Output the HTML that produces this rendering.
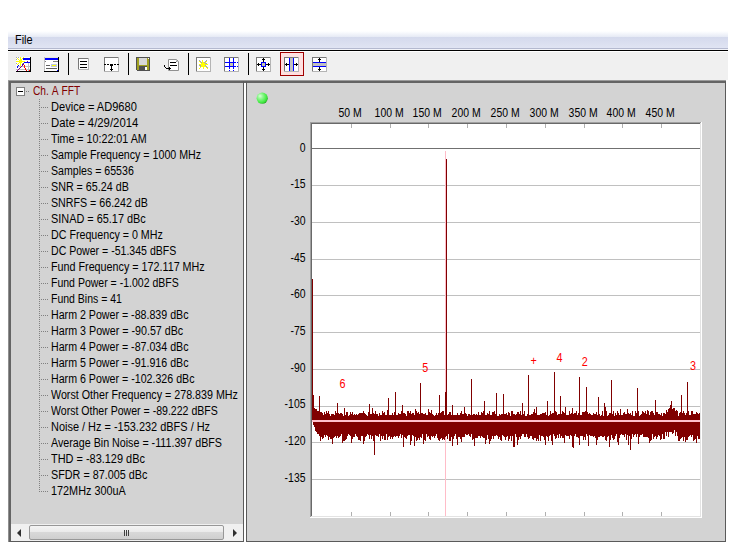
<!DOCTYPE html>
<html><head><meta charset="utf-8"><title>Ch. A FFT</title>
<style>
html,body{margin:0;padding:0;background:#fff;}
body{width:736px;height:552px;position:relative;overflow:hidden;font:12px 'Liberation Sans', sans-serif;color:#000;}
.menubar{position:absolute;left:8px;top:31px;width:720px;height:17px;background:linear-gradient(#ffffff 0%,#fbfcfe 6%,#e6eaf5 34%,#d4d9ec 35%,#e0e4f3 100%);border-bottom:1px solid #b4b9cf;}
.menubar span{position:absolute;left:7px;top:2px;font-size:12px;transform:scaleX(0.91);transform-origin:0 0;}
.mline{position:absolute;left:8px;top:49px;width:720px;height:1px;background:#f2f3f9;border-bottom:1px solid #000;}
.toolbar{position:absolute;left:8px;top:52px;width:720px;height:28px;background:#f0f0f0;}
.lpanel{position:absolute;left:8px;top:80px;width:236px;height:462px;background:#d3d3d3;box-sizing:border-box;border:1px solid #5a5a5a;border-top:3px solid #646464;border-left:3px solid #646464;}
.lpanel:before{content:'';position:absolute;left:-3px;top:-3px;width:1px;height:462px;background:#909090;}
.rpanel{position:absolute;left:246px;top:80px;width:480px;height:462px;background:#d3d3d3;box-sizing:border-box;border:1px solid #5a5a5a;border-top:3px solid #646464;}
.topline{position:absolute;left:8px;top:80px;width:718px;height:1px;background:#9c9c9c;}
.root,.row{position:absolute;height:16px;line-height:16px;white-space:pre;transform-origin:0 50%;}
.root{left:32.7px;color:#800000;transform:scaleX(0.85);word-spacing:0.8px;}
.row{left:50.7px;}
.hdot{position:absolute;left:39px;width:9px;height:1px;background:repeating-linear-gradient(90deg,#808080 0 1px,transparent 1px 2px);}
.vdot{position:absolute;left:39px;top:99px;width:1px;height:393px;background:repeating-linear-gradient(180deg,#808080 0 1px,transparent 1px 2px);}
.rdot{position:absolute;left:26px;top:91px;width:4px;height:1px;background:repeating-linear-gradient(90deg,#808080 0 1px,transparent 1px 2px);}
.pm{position:absolute;left:16px;top:87px;width:9px;height:9px;box-sizing:border-box;border:1px solid #808080;background:#fff;}
.pm i{position:absolute;left:1px;top:3px;width:5px;height:1px;background:#000;}
.hscroll{position:absolute;left:11px;top:524px;width:232px;height:17px;background:#f0f0f0;}
.thumb{position:absolute;left:18px;top:1px;width:195px;height:15px;box-sizing:border-box;border:1px solid #979797;border-radius:2px;background:linear-gradient(#f4f4f4 0%,#eaeaea 45%,#d8d8d8 50%,#cfcfcf 100%);}
.grip{position:absolute;left:94px;top:4px;width:5px;height:6px;background:repeating-linear-gradient(90deg,#404040 0 1px,transparent 1px 2px);}
.arr{position:absolute;top:5px;width:0;height:0;border-top:4px solid transparent;border-bottom:4px solid transparent;}
.arr.l{left:6px;border-right:4px solid #303030;}
.arr.r{left:222px;border-left:4px solid #303030;}
svg.plot,svg.icons{position:absolute;left:0;top:0;}
</style></head><body>
<div class="menubar"><span>File</span></div>
<div class="mline"></div>
<div class="toolbar"></div>
<div class="lpanel"></div>
<div class="rpanel"></div>
<div class="topline"></div><div style="position:absolute;left:244px;top:81px;width:2px;height:2px;background:#646464"></div>
<div class="pm"><i></i></div><div class="rdot"></div><div class="vdot"></div>
<div class="root" style="top:83px">Ch. A FFT</div>
<div class="row" style="top:99px;transform:scaleX(0.9220)">Device = AD9680</div>
<div class="hdot" style="top:107px"></div>
<div class="row" style="top:115px;transform:scaleX(0.9446)">Date = 4/29/2014</div>
<div class="hdot" style="top:123px"></div>
<div class="row" style="top:131px;transform:scaleX(0.8920)">Time = 10:22:01 AM</div>
<div class="hdot" style="top:139px"></div>
<div class="row" style="top:147px;transform:scaleX(0.8877)">Sample Frequency = 1000 MHz</div>
<div class="hdot" style="top:155px"></div>
<div class="row" style="top:163px;transform:scaleX(0.8833)">Samples = 65536</div>
<div class="hdot" style="top:171px"></div>
<div class="row" style="top:179px;transform:scaleX(0.8936)">SNR = 65.24 dB</div>
<div class="hdot" style="top:187px"></div>
<div class="row" style="top:195px;transform:scaleX(0.8885)">SNRFS = 66.242 dB</div>
<div class="hdot" style="top:203px"></div>
<div class="row" style="top:211px;transform:scaleX(0.9081)">SINAD = 65.17 dBc</div>
<div class="hdot" style="top:219px"></div>
<div class="row" style="top:227px;transform:scaleX(0.8893)">DC Frequency = 0 MHz</div>
<div class="hdot" style="top:235px"></div>
<div class="row" style="top:243px;transform:scaleX(0.8799)">DC Power = -51.345 dBFS</div>
<div class="hdot" style="top:251px"></div>
<div class="row" style="top:259px;transform:scaleX(0.8960)">Fund Frequency = 172.117 MHz</div>
<div class="hdot" style="top:267px"></div>
<div class="row" style="top:275px;transform:scaleX(0.8762)">Fund Power = -1.002 dBFS</div>
<div class="hdot" style="top:283px"></div>
<div class="row" style="top:291px;transform:scaleX(0.8746)">Fund Bins = 41</div>
<div class="hdot" style="top:299px"></div>
<div class="row" style="top:307px;transform:scaleX(0.8866)">Harm 2 Power = -88.839 dBc</div>
<div class="hdot" style="top:315px"></div>
<div class="row" style="top:323px;transform:scaleX(0.8908)">Harm 3 Power = -90.57 dBc</div>
<div class="hdot" style="top:331px"></div>
<div class="row" style="top:339px;transform:scaleX(0.8866)">Harm 4 Power = -87.034 dBc</div>
<div class="hdot" style="top:347px"></div>
<div class="row" style="top:355px;transform:scaleX(0.8866)">Harm 5 Power = -91.916 dBc</div>
<div class="hdot" style="top:363px"></div>
<div class="row" style="top:371px;transform:scaleX(0.8872)">Harm 6 Power = -102.326 dBc</div>
<div class="hdot" style="top:379px"></div>
<div class="row" style="top:387px;transform:scaleX(0.8919)">Worst Other Frequency = 278.839 MHz</div>
<div class="hdot" style="top:395px"></div>
<div class="row" style="top:403px;transform:scaleX(0.8801)">Worst Other Power = -89.222 dBFS</div>
<div class="hdot" style="top:411px"></div>
<div class="row" style="top:419px;transform:scaleX(0.9122)">Noise / Hz = -153.232 dBFS / Hz</div>
<div class="hdot" style="top:427px"></div>
<div class="row" style="top:435px;transform:scaleX(0.8916)">Average Bin Noise = -111.397 dBFS</div>
<div class="hdot" style="top:443px"></div>
<div class="row" style="top:451px;transform:scaleX(0.9111)">THD = -83.129 dBc</div>
<div class="hdot" style="top:459px"></div>
<div class="row" style="top:467px;transform:scaleX(0.8995)">SFDR = 87.005 dBc</div>
<div class="hdot" style="top:475px"></div>
<div class="row" style="top:483px;transform:scaleX(0.9043)">172MHz 300uA</div>
<div class="hdot" style="top:491px"></div>
<div class="hscroll"><div class="arr l"></div><div class="thumb"><div class="grip"></div></div><div class="arr r"></div></div>
<svg class="plot" width="736" height="552" viewBox="0 0 736 552" shape-rendering="crispEdges" font-family="'Liberation Sans', sans-serif" font-size="12">
<rect x="310" y="122" width="392" height="396" fill="#ffffff"/><rect x="310" y="122" width="391" height="395" fill="#a0a0a0"/><rect x="311" y="123" width="390" height="394" fill="#e3e3e3"/><rect x="311" y="123" width="389" height="393" fill="#696969"/>
<rect x="312" y="124" width="388" height="392" fill="#ffffff"/>
<rect x="312" y="148" width="388" height="1" fill="#707070"/><rect x="312" y="185" width="388" height="1" fill="#c0c0c0"/><rect x="312" y="222" width="388" height="1" fill="#c0c0c0"/><rect x="312" y="259" width="388" height="1" fill="#c0c0c0"/><rect x="312" y="295" width="388" height="1" fill="#c0c0c0"/><rect x="312" y="332" width="388" height="1" fill="#c0c0c0"/><rect x="312" y="369" width="388" height="1" fill="#c0c0c0"/><rect x="312" y="406" width="388" height="1" fill="#c0c0c0"/><rect x="312" y="442" width="388" height="1" fill="#c0c0c0"/><rect x="312" y="479" width="388" height="1" fill="#c0c0c0"/>
<rect x="351" y="124" width="1" height="4" fill="#b0b0b0"/><rect x="351" y="512" width="1" height="4" fill="#b0b0b0"/><rect x="390" y="124" width="1" height="4" fill="#b0b0b0"/><rect x="390" y="512" width="1" height="4" fill="#b0b0b0"/><rect x="428" y="124" width="1" height="4" fill="#b0b0b0"/><rect x="428" y="512" width="1" height="4" fill="#b0b0b0"/><rect x="467" y="124" width="1" height="4" fill="#b0b0b0"/><rect x="467" y="512" width="1" height="4" fill="#b0b0b0"/><rect x="506" y="124" width="1" height="4" fill="#b0b0b0"/><rect x="506" y="512" width="1" height="4" fill="#b0b0b0"/><rect x="545" y="124" width="1" height="4" fill="#b0b0b0"/><rect x="545" y="512" width="1" height="4" fill="#b0b0b0"/><rect x="584" y="124" width="1" height="4" fill="#b0b0b0"/><rect x="584" y="512" width="1" height="4" fill="#b0b0b0"/><rect x="622" y="124" width="1" height="4" fill="#b0b0b0"/><rect x="622" y="512" width="1" height="4" fill="#b0b0b0"/><rect x="661" y="124" width="1" height="4" fill="#b0b0b0"/><rect x="661" y="512" width="1" height="4" fill="#b0b0b0"/>
<rect x="445" y="151" width="1" height="365" fill="#ffbcc8"/>
<g fill="#800000"><path d="M312,395 L313,395 L313,395 L314,395 L314,408 L315,408 L315,409 L316,409 L316,409 L317,409 L317,411 L318,411 L318,411 L319,411 L319,411 L320,411 L320,412 L321,412 L321,412 L322,412 L322,413 L323,413 L323,415 L324,415 L324,412 L325,412 L325,414 L326,414 L326,411 L327,411 L327,413 L328,413 L328,411 L329,411 L329,414 L330,414 L330,416 L331,416 L331,414 L332,414 L332,414 L333,414 L333,414 L334,414 L334,415 L335,415 L335,411 L336,411 L336,413 L337,413 L337,412 L338,412 L338,413 L339,413 L339,414 L340,414 L340,413 L341,413 L341,413 L342,413 L342,414 L343,414 L343,416 L344,416 L344,415 L345,415 L345,415 L346,415 L346,412 L347,412 L347,412 L348,412 L348,416 L349,416 L349,415 L350,415 L350,412 L351,412 L351,414 L352,414 L352,412 L353,412 L353,415 L354,415 L354,414 L355,414 L355,415 L356,415 L356,414 L357,414 L357,415 L358,415 L358,414 L359,414 L359,413 L360,413 L360,413 L361,413 L361,413 L362,413 L362,413 L363,413 L363,411 L364,411 L364,413 L365,413 L365,414 L366,414 L366,415 L367,415 L367,416 L368,416 L368,412 L369,412 L369,413 L370,413 L370,414 L371,414 L371,414 L372,414 L372,408 L373,408 L373,413 L374,413 L374,414 L375,414 L375,411 L376,411 L376,414 L377,414 L377,414 L378,414 L378,416 L379,416 L379,413 L380,413 L380,415 L381,415 L381,415 L382,415 L382,411 L383,411 L383,413 L384,413 L384,412 L385,412 L385,415 L386,415 L386,415 L387,415 L387,410 L388,410 L388,415 L389,415 L389,415 L390,415 L390,415 L391,415 L391,415 L392,415 L392,413 L393,413 L393,415 L394,415 L394,412 L395,412 L395,413 L396,413 L396,415 L397,415 L397,415 L398,415 L398,413 L399,413 L399,414 L400,414 L400,414 L401,414 L401,411 L402,411 L402,415 L403,415 L403,413 L404,413 L404,413 L405,413 L405,414 L406,414 L406,416 L407,416 L407,411 L408,411 L408,411 L409,411 L409,413 L410,413 L410,411 L411,411 L411,414 L412,414 L412,413 L413,413 L413,413 L414,413 L414,415 L415,415 L415,409 L416,409 L416,411 L417,411 L417,413 L418,413 L418,412 L419,412 L419,414 L420,414 L420,413 L421,413 L421,413 L422,413 L422,413 L423,413 L423,414 L424,414 L424,414 L425,414 L425,413 L426,413 L426,415 L427,415 L427,415 L428,415 L428,409 L429,409 L429,412 L430,412 L430,413 L431,413 L431,410 L432,410 L432,414 L433,414 L433,415 L434,415 L434,416 L435,416 L435,415 L436,415 L436,413 L437,413 L437,415 L438,415 L438,413 L439,413 L439,411 L440,411 L440,413 L441,413 L441,412 L442,412 L442,411 L443,411 L443,411 L444,411 L444,415 L445,415 L445,415 L446,415 L446,413 L447,413 L447,415 L448,415 L448,414 L449,414 L449,412 L450,412 L450,412 L451,412 L451,415 L452,415 L452,413 L453,413 L453,415 L454,415 L454,415 L455,415 L455,415 L456,415 L456,415 L457,415 L457,413 L458,413 L458,415 L459,415 L459,415 L460,415 L460,413 L461,413 L461,411 L462,411 L462,414 L463,414 L463,414 L464,414 L464,414 L465,414 L465,413 L466,413 L466,414 L467,414 L467,416 L468,416 L468,414 L469,414 L469,414 L470,414 L470,415 L471,415 L471,414 L472,414 L472,415 L473,415 L473,414 L474,414 L474,414 L475,414 L475,415 L476,415 L476,414 L477,414 L477,415 L478,415 L478,412 L479,412 L479,415 L480,415 L480,415 L481,415 L481,412 L482,412 L482,413 L483,413 L483,411 L484,411 L484,413 L485,413 L485,415 L486,415 L486,415 L487,415 L487,413 L488,413 L488,414 L489,414 L489,411 L490,411 L490,415 L491,415 L491,415 L492,415 L492,412 L493,412 L493,412 L494,412 L494,411 L495,411 L495,414 L496,414 L496,414 L497,414 L497,416 L498,416 L498,416 L499,416 L499,414 L500,414 L500,415 L501,415 L501,414 L502,414 L502,414 L503,414 L503,414 L504,414 L504,414 L505,414 L505,414 L506,414 L506,413 L507,413 L507,415 L508,415 L508,412 L509,412 L509,413 L510,413 L510,416 L511,416 L511,411 L512,411 L512,411 L513,411 L513,414 L514,414 L514,414 L515,414 L515,415 L516,415 L516,414 L517,414 L517,412 L518,412 L518,412 L519,412 L519,414 L520,414 L520,411 L521,411 L521,415 L522,415 L522,415 L523,415 L523,414 L524,414 L524,411 L525,411 L525,416 L526,416 L526,416 L527,416 L527,414 L528,414 L528,416 L529,416 L529,415 L530,415 L530,415 L531,415 L531,414 L532,414 L532,414 L533,414 L533,412 L534,412 L534,409 L535,409 L535,413 L536,413 L536,414 L537,414 L537,415 L538,415 L538,415 L539,415 L539,415 L540,415 L540,414 L541,414 L541,414 L542,414 L542,413 L543,413 L543,413 L544,413 L544,413 L545,413 L545,412 L546,412 L546,415 L547,415 L547,411 L548,411 L548,416 L549,416 L549,415 L550,415 L550,411 L551,411 L551,414 L552,414 L552,413 L553,413 L553,413 L554,413 L554,414 L555,414 L555,411 L556,411 L556,412 L557,412 L557,415 L558,415 L558,414 L559,414 L559,414 L560,414 L560,414 L561,414 L561,414 L562,414 L562,411 L563,411 L563,412 L564,412 L564,413 L565,413 L565,414 L566,414 L566,415 L567,415 L567,415 L568,415 L568,415 L569,415 L569,411 L570,411 L570,414 L571,414 L571,413 L572,413 L572,413 L573,413 L573,414 L574,414 L574,413 L575,413 L575,413 L576,413 L576,411 L577,411 L577,415 L578,415 L578,413 L579,413 L579,410 L580,410 L580,415 L581,415 L581,415 L582,415 L582,412 L583,412 L583,412 L584,412 L584,412 L585,412 L585,411 L586,411 L586,413 L587,413 L587,412 L588,412 L588,414 L589,414 L589,413 L590,413 L590,414 L591,414 L591,415 L592,415 L592,415 L593,415 L593,413 L594,413 L594,414 L595,414 L595,414 L596,414 L596,412 L597,412 L597,415 L598,415 L598,412 L599,412 L599,414 L600,414 L600,416 L601,416 L601,415 L602,415 L602,411 L603,411 L603,416 L604,416 L604,413 L605,413 L605,409 L606,409 L606,411 L607,411 L607,416 L608,416 L608,415 L609,415 L609,413 L610,413 L610,413 L611,413 L611,415 L612,415 L612,414 L613,414 L613,411 L614,411 L614,416 L615,416 L615,413 L616,413 L616,415 L617,415 L617,411 L618,411 L618,413 L619,413 L619,415 L620,415 L620,409 L621,409 L621,415 L622,415 L622,415 L623,415 L623,413 L624,413 L624,412 L625,412 L625,414 L626,414 L626,414 L627,414 L627,409 L628,409 L628,413 L629,413 L629,414 L630,414 L630,413 L631,413 L631,415 L632,415 L632,411 L633,411 L633,416 L634,416 L634,416 L635,416 L635,411 L636,411 L636,413 L637,413 L637,411 L638,411 L638,411 L639,411 L639,416 L640,416 L640,415 L641,415 L641,414 L642,414 L642,411 L643,411 L643,412 L644,412 L644,413 L645,413 L645,411 L646,411 L646,414 L647,414 L647,410 L648,410 L648,411 L649,411 L649,415 L650,415 L650,412 L651,412 L651,411 L652,411 L652,411 L653,411 L653,413 L654,413 L654,415 L655,415 L655,413 L656,413 L656,412 L657,412 L657,412 L658,412 L658,414 L659,414 L659,414 L660,414 L660,415 L661,415 L661,413 L662,413 L662,416 L663,416 L663,413 L664,413 L664,413 L665,413 L665,414 L666,414 L666,410 L667,410 L667,412 L668,412 L668,409 L669,409 L669,408 L670,408 L670,405 L671,405 L671,408 L672,408 L672,409 L673,409 L673,408 L674,408 L674,408 L675,408 L675,411 L676,411 L676,410 L677,410 L677,411 L678,411 L678,416 L679,416 L679,413 L680,413 L680,412 L681,412 L681,412 L682,412 L682,413 L683,413 L683,411 L684,411 L684,413 L685,413 L685,415 L686,415 L686,413 L687,413 L687,415 L688,415 L688,411 L689,411 L689,415 L690,415 L690,415 L691,415 L691,411 L692,411 L692,411 L693,411 L693,414 L694,414 L694,414 L695,414 L695,414 L696,414 L696,412 L697,412 L697,413 L698,413 L698,414 L699,414 L699,413 L700,413 L700,439 L699,439 L699,439 L698,439 L698,436 L697,436 L697,436 L696,436 L696,439 L695,439 L695,440 L694,440 L694,441 L693,441 L693,435 L692,435 L692,437 L691,437 L691,435 L690,435 L690,436 L689,436 L689,437 L688,437 L688,440 L687,440 L687,440 L686,440 L686,442 L685,442 L685,437 L684,437 L684,441 L683,441 L683,437 L682,437 L682,438 L681,438 L681,439 L680,439 L680,441 L679,441 L679,441 L678,441 L678,436 L677,436 L677,432 L676,432 L676,436 L675,436 L675,430 L674,430 L674,433 L673,433 L673,434 L672,434 L672,432 L671,432 L671,432 L670,432 L670,432 L669,432 L669,437 L668,437 L668,432 L667,432 L667,436 L666,436 L666,432 L665,432 L665,439 L664,439 L664,439 L663,439 L663,434 L662,434 L662,439 L661,439 L661,440 L660,440 L660,436 L659,436 L659,435 L658,435 L658,437 L657,437 L657,439 L656,439 L656,436 L655,436 L655,437 L654,437 L654,439 L653,439 L653,434 L652,434 L652,440 L651,440 L651,441 L650,441 L650,434 L649,434 L649,438 L648,438 L648,437 L647,437 L647,437 L646,437 L646,437 L645,437 L645,437 L644,437 L644,437 L643,437 L643,434 L642,434 L642,435 L641,435 L641,435 L640,435 L640,437 L639,437 L639,435 L638,435 L638,434 L637,434 L637,437 L636,437 L636,434 L635,434 L635,435 L634,435 L634,437 L633,437 L633,434 L632,434 L632,439 L631,439 L631,438 L630,438 L630,436 L629,436 L629,436 L628,436 L628,435 L627,435 L627,440 L626,440 L626,434 L625,434 L625,437 L624,437 L624,435 L623,435 L623,435 L622,435 L622,434 L621,434 L621,435 L620,435 L620,438 L619,438 L619,436 L618,436 L618,442 L617,442 L617,434 L616,434 L616,436 L615,436 L615,439 L614,439 L614,440 L613,440 L613,438 L612,438 L612,435 L611,435 L611,440 L610,440 L610,436 L609,436 L609,436 L608,436 L608,437 L607,437 L607,441 L606,441 L606,440 L605,440 L605,436 L604,436 L604,437 L603,437 L603,437 L602,437 L602,436 L601,436 L601,436 L600,436 L600,437 L599,437 L599,437 L598,437 L598,440 L597,440 L597,445 L596,445 L596,438 L595,438 L595,436 L594,436 L594,437 L593,437 L593,436 L592,436 L592,436 L591,436 L591,436 L590,436 L590,435 L589,435 L589,436 L588,436 L588,436 L587,436 L587,434 L586,434 L586,440 L585,440 L585,437 L584,437 L584,440 L583,440 L583,436 L582,436 L582,436 L581,436 L581,436 L580,436 L580,439 L579,439 L579,438 L578,438 L578,437 L577,437 L577,437 L576,437 L576,434 L575,434 L575,436 L574,436 L574,440 L573,440 L573,439 L572,439 L572,436 L571,436 L571,435 L570,435 L570,439 L569,439 L569,436 L568,436 L568,436 L567,436 L567,436 L566,436 L566,435 L565,435 L565,443 L564,443 L564,438 L563,438 L563,438 L562,438 L562,436 L561,436 L561,438 L560,438 L560,434 L559,434 L559,438 L558,438 L558,435 L557,435 L557,438 L556,438 L556,439 L555,439 L555,436 L554,436 L554,434 L553,434 L553,445 L552,445 L552,441 L551,441 L551,435 L550,435 L550,436 L549,436 L549,441 L548,441 L548,437 L547,437 L547,436 L546,436 L546,439 L545,439 L545,440 L544,440 L544,437 L543,437 L543,436 L542,436 L542,436 L541,436 L541,441 L540,441 L540,435 L539,435 L539,441 L538,441 L538,439 L537,439 L537,441 L536,441 L536,438 L535,438 L535,438 L534,438 L534,440 L533,440 L533,439 L532,439 L532,436 L531,436 L531,436 L530,436 L530,438 L529,438 L529,439 L528,439 L528,437 L527,437 L527,434 L526,434 L526,437 L525,437 L525,437 L524,437 L524,434 L523,434 L523,434 L522,434 L522,436 L521,436 L521,439 L520,439 L520,437 L519,437 L519,440 L518,440 L518,437 L517,437 L517,437 L516,437 L516,434 L515,434 L515,436 L514,436 L514,435 L513,435 L513,436 L512,436 L512,441 L511,441 L511,436 L510,436 L510,439 L509,439 L509,441 L508,441 L508,436 L507,436 L507,437 L506,437 L506,440 L505,440 L505,437 L504,437 L504,436 L503,436 L503,435 L502,435 L502,441 L501,441 L501,440 L500,440 L500,437 L499,437 L499,439 L498,439 L498,436 L497,436 L497,435 L496,435 L496,436 L495,436 L495,436 L494,436 L494,439 L493,439 L493,436 L492,436 L492,439 L491,439 L491,441 L490,441 L490,444 L489,444 L489,439 L488,439 L488,435 L487,435 L487,440 L486,440 L486,437 L485,437 L485,438 L484,438 L484,438 L483,438 L483,437 L482,437 L482,436 L481,436 L481,438 L480,438 L480,436 L479,436 L479,436 L478,436 L478,438 L477,438 L477,438 L476,438 L476,438 L475,438 L475,446 L474,446 L474,439 L473,439 L473,440 L472,440 L472,434 L471,434 L471,437 L470,437 L470,436 L469,436 L469,434 L468,434 L468,435 L467,435 L467,435 L466,435 L466,434 L465,434 L465,437 L464,437 L464,437 L463,437 L463,437 L462,437 L462,442 L461,442 L461,439 L460,439 L460,437 L459,437 L459,437 L458,437 L458,435 L457,435 L457,439 L456,439 L456,434 L455,434 L455,436 L454,436 L454,439 L453,439 L453,439 L452,439 L452,437 L451,437 L451,441 L450,441 L450,441 L449,441 L449,434 L448,434 L448,439 L447,439 L447,436 L446,436 L446,437 L445,437 L445,440 L444,440 L444,439 L443,439 L443,440 L442,440 L442,438 L441,438 L441,439 L440,439 L440,441 L439,441 L439,440 L438,440 L438,438 L437,438 L437,434 L436,434 L436,436 L435,436 L435,438 L434,438 L434,436 L433,436 L433,437 L432,437 L432,436 L431,436 L431,440 L430,440 L430,439 L429,439 L429,436 L428,436 L428,437 L427,437 L427,434 L426,434 L426,441 L425,441 L425,440 L424,440 L424,438 L423,438 L423,434 L422,434 L422,438 L421,438 L421,437 L420,437 L420,440 L419,440 L419,438 L418,438 L418,440 L417,440 L417,441 L416,441 L416,437 L415,437 L415,436 L414,436 L414,436 L413,436 L413,435 L412,435 L412,441 L411,441 L411,437 L410,437 L410,435 L409,435 L409,435 L408,435 L408,436 L407,436 L407,439 L406,439 L406,438 L405,438 L405,437 L404,437 L404,435 L403,435 L403,435 L402,435 L402,438 L401,438 L401,434 L400,434 L400,436 L399,436 L399,438 L398,438 L398,436 L397,436 L397,436 L396,436 L396,437 L395,437 L395,436 L394,436 L394,437 L393,437 L393,439 L392,439 L392,437 L391,437 L391,439 L390,439 L390,436 L389,436 L389,437 L388,437 L388,440 L387,440 L387,434 L386,434 L386,440 L385,440 L385,440 L384,440 L384,436 L383,436 L383,439 L382,439 L382,436 L381,436 L381,441 L380,441 L380,434 L379,434 L379,437 L378,437 L378,436 L377,436 L377,436 L376,436 L376,435 L375,435 L375,436 L374,436 L374,441 L373,441 L373,436 L372,436 L372,439 L371,439 L371,435 L370,435 L370,439 L369,439 L369,435 L368,435 L368,434 L367,434 L367,436 L366,436 L366,437 L365,437 L365,441 L364,441 L364,434 L363,434 L363,436 L362,436 L362,436 L361,436 L361,441 L360,441 L360,440 L359,440 L359,440 L358,440 L358,437 L357,437 L357,436 L356,436 L356,434 L355,434 L355,437 L354,437 L354,437 L353,437 L353,439 L352,439 L352,437 L351,437 L351,436 L350,436 L350,435 L349,435 L349,434 L348,434 L348,436 L347,436 L347,439 L346,439 L346,440 L345,440 L345,441 L344,441 L344,441 L343,441 L343,443 L342,443 L342,434 L341,434 L341,436 L340,436 L340,437 L339,437 L339,438 L338,438 L338,436 L337,436 L337,438 L336,438 L336,436 L335,436 L335,437 L334,437 L334,438 L333,438 L333,441 L332,441 L332,439 L331,439 L331,439 L330,439 L330,437 L329,437 L329,440 L328,440 L328,436 L327,436 L327,435 L326,435 L326,437 L325,437 L325,435 L324,435 L324,438 L323,438 L323,439 L322,439 L322,437 L321,437 L321,435 L320,435 L320,436 L319,436 L319,434 L318,434 L318,434 L317,434 L317,432 L316,432 L316,431 L315,431 L315,427 L314,427 L314,425 L313,425 L313,420 L312,420Z"/><rect x="312" y="279" width="1" height="141"/><rect x="319" y="396" width="1" height="24"/><rect x="337" y="403" width="1" height="17"/><rect x="344" y="408" width="1" height="12"/><rect x="369" y="404" width="1" height="16"/><rect x="388" y="398" width="1" height="22"/><rect x="395" y="392" width="1" height="28"/><rect x="402" y="405" width="1" height="15"/><rect x="420" y="383" width="1" height="37"/><rect x="439" y="395" width="1" height="25"/><rect x="445" y="392" width="1" height="28"/><rect x="446" y="159" width="1" height="261"/><rect x="452" y="405" width="1" height="15"/><rect x="464" y="407" width="1" height="13"/><rect x="471" y="379" width="1" height="41"/><rect x="484" y="401" width="1" height="19"/><rect x="496" y="393" width="1" height="27"/><rect x="503" y="394" width="1" height="26"/><rect x="522" y="403" width="1" height="17"/><rect x="528" y="375" width="1" height="45"/><rect x="536" y="407" width="1" height="13"/><rect x="547" y="401" width="1" height="19"/><rect x="554" y="372" width="1" height="48"/><rect x="560" y="396" width="1" height="24"/><rect x="565" y="407" width="1" height="13"/><rect x="572" y="408" width="1" height="12"/><rect x="579" y="377" width="1" height="43"/><rect x="586" y="387" width="1" height="33"/><rect x="598" y="397" width="1" height="23"/><rect x="604" y="403" width="1" height="17"/><rect x="605" y="407" width="1" height="13"/><rect x="611" y="380" width="1" height="40"/><rect x="637" y="388" width="1" height="32"/><rect x="655" y="400" width="1" height="20"/><rect x="671" y="401" width="1" height="19"/><rect x="681" y="395" width="1" height="25"/><rect x="687" y="382" width="1" height="38"/><rect x="332" y="420" width="1" height="24"/><rect x="320" y="420" width="1" height="21"/><rect x="374" y="420" width="1" height="35"/><rect x="403" y="420" width="1" height="27"/><rect x="414" y="420" width="1" height="26"/><rect x="452" y="420" width="1" height="26"/><rect x="457" y="420" width="1" height="25"/><rect x="513" y="420" width="1" height="27"/><rect x="514" y="420" width="1" height="27"/><rect x="517" y="420" width="1" height="25"/><rect x="572" y="420" width="1" height="27"/><rect x="573" y="420" width="1" height="28"/><rect x="579" y="420" width="1" height="25"/><rect x="588" y="420" width="1" height="26"/><rect x="609" y="420" width="1" height="27"/><rect x="618" y="420" width="1" height="25"/><rect x="628" y="420" width="1" height="25"/><rect x="630" y="420" width="1" height="30"/><rect x="638" y="420" width="1" height="24"/><rect x="649" y="420" width="1" height="23"/><rect x="696" y="420" width="1" height="23"/><rect x="410" y="420" width="1" height="25"/><rect x="423" y="420" width="1" height="24"/><rect x="351" y="420" width="1" height="23"/><rect x="363" y="420" width="1" height="24"/><rect x="545" y="420" width="1" height="25"/><rect x="485" y="420" width="1" height="24"/></g>
<rect x="312" y="420" width="388" height="2" fill="#ffc0cb"/>
<g fill="#000" textLength="0"><text transform="translate(305.5,151.8) scale(0.87,1)" text-anchor="end">0</text><text transform="translate(305.5,188.4) scale(0.87,1)" text-anchor="end">-15</text><text transform="translate(305.5,225.1) scale(0.87,1)" text-anchor="end">-30</text><text transform="translate(305.5,261.7) scale(0.87,1)" text-anchor="end">-45</text><text transform="translate(305.5,298.4) scale(0.87,1)" text-anchor="end">-60</text><text transform="translate(305.5,335.0) scale(0.87,1)" text-anchor="end">-75</text><text transform="translate(305.5,371.6) scale(0.87,1)" text-anchor="end">-90</text><text transform="translate(305.5,408.3) scale(0.87,1)" text-anchor="end">-105</text><text transform="translate(305.5,444.9) scale(0.87,1)" text-anchor="end">-120</text><text transform="translate(305.5,481.6) scale(0.87,1)" text-anchor="end">-135</text><text transform="translate(350.1,117) scale(0.87,1)" text-anchor="middle">50 M</text><text transform="translate(389.1,117) scale(0.87,1)" text-anchor="middle">100 M</text><text transform="translate(427.1,117) scale(0.87,1)" text-anchor="middle">150 M</text><text transform="translate(466.1,117) scale(0.87,1)" text-anchor="middle">200 M</text><text transform="translate(505.1,117) scale(0.87,1)" text-anchor="middle">250 M</text><text transform="translate(544.1,117) scale(0.87,1)" text-anchor="middle">300 M</text><text transform="translate(583.1,117) scale(0.87,1)" text-anchor="middle">350 M</text><text transform="translate(621.1,117) scale(0.87,1)" text-anchor="middle">400 M</text><text transform="translate(660.1,117) scale(0.87,1)" text-anchor="middle">450 M</text></g>
<text transform="translate(342.5,388) scale(0.9,1)" text-anchor="middle" fill="#ff0000">6</text><text transform="translate(425.3,372) scale(0.9,1)" text-anchor="middle" fill="#ff0000">5</text><text transform="translate(533.6,365) scale(0.9,1)" text-anchor="middle" fill="#ff0000">+</text><text transform="translate(559.4,362) scale(0.9,1)" text-anchor="middle" fill="#ff0000">4</text><text transform="translate(584.8,366) scale(0.9,1)" text-anchor="middle" fill="#ff0000">2</text><text transform="translate(693,370) scale(0.9,1)" text-anchor="middle" fill="#ff0000">3</text>
<circle cx="262.2" cy="98.2" r="5.6" fill="url(#led)" shape-rendering="auto"/>
<defs><radialGradient id="led" cx="0.38" cy="0.38" r="0.68" fx="0.3" fy="0.3"><stop offset="0" stop-color="#d8ffd8"/><stop offset="0.3" stop-color="#98f898"/><stop offset="0.65" stop-color="#58f058"/><stop offset="0.85" stop-color="#38e038"/><stop offset="1" stop-color="#1c9c1c"/></radialGradient></defs>
</svg>
<svg class="icons" width="736" height="552" viewBox="0 0 736 552" shape-rendering="crispEdges"><rect x="68" y="53" width="1" height="22" fill="#000"/><rect x="128" y="53" width="1" height="22" fill="#000"/><rect x="188" y="53" width="1" height="22" fill="#000"/><rect x="248" y="53" width="1" height="22" fill="#000"/><rect x="16" y="57" width="15" height="15" fill="#fff"/><rect x="16" y="57" width="1" height="1" fill="#a0a0b8"/><rect x="18" y="57" width="1" height="1" fill="#a0a0b8"/><rect x="20" y="57" width="1" height="1" fill="#ffff00"/><rect x="23" y="57" width="1" height="1" fill="#ffff00"/><rect x="30" y="57" width="1" height="1" fill="#000000"/><rect x="17" y="58" width="1" height="1" fill="#ffff00"/><rect x="20" y="58" width="1" height="1" fill="#ffff00"/><rect x="22" y="58" width="1" height="1" fill="#ffff00"/><rect x="23" y="58" width="7" height="1" fill="#0000ff"/><rect x="30" y="58" width="1" height="1" fill="#000000"/><rect x="16" y="59" width="1" height="1" fill="#a0a0b8"/><rect x="18" y="59" width="1" height="1" fill="#ffff00"/><rect x="20" y="59" width="2" height="1" fill="#ffff00"/><rect x="23" y="59" width="7" height="1" fill="#0000ff"/><rect x="30" y="59" width="1" height="1" fill="#000000"/><rect x="19" y="60" width="3" height="1" fill="#ffff00"/><rect x="30" y="60" width="1" height="1" fill="#000000"/><rect x="16" y="61" width="9" height="1" fill="#ffff00"/><rect x="27" y="61" width="1" height="1" fill="#800080"/><rect x="30" y="61" width="1" height="1" fill="#000000"/><rect x="19" y="62" width="3" height="1" fill="#ffff00"/><rect x="24" y="62" width="6" height="1" fill="#0000ff"/><rect x="30" y="62" width="1" height="1" fill="#000000"/><rect x="16" y="63" width="1" height="1" fill="#a0a0b8"/><rect x="18" y="63" width="1" height="1" fill="#ffff00"/><rect x="20" y="63" width="1" height="1" fill="#ffff00"/><rect x="22" y="63" width="1" height="1" fill="#ffff00"/><rect x="23" y="63" width="1" height="1" fill="#0000ff"/><rect x="28" y="63" width="1" height="1" fill="#c0c0c0"/><rect x="30" y="63" width="1" height="1" fill="#000000"/><rect x="17" y="64" width="1" height="1" fill="#ffff00"/><rect x="20" y="64" width="1" height="1" fill="#ffff00"/><rect x="22" y="64" width="1" height="1" fill="#0000ff"/><rect x="23" y="64" width="1" height="1" fill="#ff0000"/><rect x="28" y="64" width="1" height="1" fill="#c0c0c0"/><rect x="30" y="64" width="1" height="1" fill="#000000"/><rect x="18" y="65" width="1" height="1" fill="#0000ff"/><rect x="20" y="65" width="1" height="1" fill="#ffff00"/><rect x="22" y="65" width="1" height="1" fill="#800080"/><rect x="24" y="65" width="1" height="1" fill="#ff0000"/><rect x="28" y="65" width="1" height="1" fill="#c0c0c0"/><rect x="30" y="65" width="1" height="1" fill="#000000"/><rect x="17" y="66" width="1" height="1" fill="#0000ff"/><rect x="18" y="66" width="3" height="1" fill="#c0c0c0"/><rect x="21" y="66" width="1" height="1" fill="#800080"/><rect x="22" y="66" width="2" height="1" fill="#c0c0c0"/><rect x="24" y="66" width="1" height="1" fill="#ff0000"/><rect x="25" y="66" width="5" height="1" fill="#c0c0c0"/><rect x="30" y="66" width="1" height="1" fill="#000000"/><rect x="17" y="67" width="1" height="1" fill="#0000ff"/><rect x="20" y="67" width="1" height="1" fill="#800080"/><rect x="24" y="67" width="1" height="1" fill="#ff0000"/><rect x="28" y="67" width="1" height="1" fill="#c0c0c0"/><rect x="30" y="67" width="1" height="1" fill="#000000"/><rect x="19" y="68" width="1" height="1" fill="#800080"/><rect x="25" y="68" width="1" height="1" fill="#ff0000"/><rect x="28" y="68" width="1" height="1" fill="#c0c0c0"/><rect x="30" y="68" width="1" height="1" fill="#000000"/><rect x="16" y="69" width="2" height="1" fill="#c0c0c0"/><rect x="18" y="69" width="1" height="1" fill="#800080"/><rect x="19" y="69" width="6" height="1" fill="#c0c0c0"/><rect x="25" y="69" width="1" height="1" fill="#ff0000"/><rect x="26" y="69" width="4" height="1" fill="#c0c0c0"/><rect x="30" y="69" width="1" height="1" fill="#000000"/><rect x="17" y="70" width="1" height="1" fill="#800080"/><rect x="26" y="70" width="1" height="1" fill="#ff0000"/><rect x="28" y="70" width="1" height="1" fill="#c0c0c0"/><rect x="29" y="70" width="1" height="1" fill="#ff0000"/><rect x="30" y="70" width="1" height="1" fill="#000000"/><rect x="16" y="71" width="15" height="1" fill="#000000"/><rect x="44" y="57" width="15" height="15" fill="#fff"/><rect x="44" y="57" width="1" height="1" fill="#c0c0c0"/><rect x="45" y="57" width="13" height="1" fill="#e8e8d8"/><rect x="58" y="57" width="1" height="1" fill="#000000"/><rect x="44" y="58" width="1" height="1" fill="#c0c0c0"/><rect x="45" y="58" width="13" height="1" fill="#0000ff"/><rect x="58" y="58" width="1" height="1" fill="#000000"/><rect x="44" y="59" width="1" height="1" fill="#c0c0c0"/><rect x="45" y="59" width="13" height="1" fill="#0000ff"/><rect x="58" y="59" width="1" height="1" fill="#000000"/><rect x="44" y="60" width="1" height="1" fill="#c0c0c0"/><rect x="58" y="60" width="1" height="1" fill="#000000"/><rect x="44" y="61" width="1" height="1" fill="#c0c0c0"/><rect x="45" y="61" width="1" height="1" fill="#808080"/><rect x="53" y="61" width="5" height="1" fill="#808080"/><rect x="58" y="61" width="1" height="1" fill="#000000"/><rect x="44" y="62" width="1" height="1" fill="#c0c0c0"/><rect x="58" y="62" width="1" height="1" fill="#000000"/><rect x="44" y="63" width="1" height="1" fill="#c0c0c0"/><rect x="58" y="63" width="1" height="1" fill="#000000"/><rect x="44" y="64" width="1" height="1" fill="#c0c0c0"/><rect x="51" y="64" width="6" height="1" fill="#c0c8e0"/><rect x="58" y="64" width="1" height="1" fill="#000000"/><rect x="44" y="65" width="1" height="1" fill="#c0c0c0"/><rect x="46" y="65" width="4" height="1" fill="#606060"/><rect x="51" y="65" width="1" height="1" fill="#c0c8e0"/><rect x="52" y="65" width="4" height="1" fill="#ffff00"/><rect x="56" y="65" width="1" height="1" fill="#c0c8e0"/><rect x="58" y="65" width="1" height="1" fill="#000000"/><rect x="44" y="66" width="1" height="1" fill="#c0c0c0"/><rect x="51" y="66" width="6" height="1" fill="#c0c8e0"/><rect x="58" y="66" width="1" height="1" fill="#000000"/><rect x="44" y="67" width="1" height="1" fill="#c0c0c0"/><rect x="58" y="67" width="1" height="1" fill="#000000"/><rect x="44" y="68" width="1" height="1" fill="#c0c0c0"/><rect x="46" y="68" width="11" height="1" fill="#606060"/><rect x="58" y="68" width="1" height="1" fill="#000000"/><rect x="44" y="69" width="1" height="1" fill="#c0c0c0"/><rect x="58" y="69" width="1" height="1" fill="#000000"/><rect x="44" y="70" width="1" height="1" fill="#c0c0c0"/><rect x="57" y="70" width="1" height="1" fill="#0000ff"/><rect x="58" y="70" width="1" height="1" fill="#000000"/><rect x="44" y="71" width="15" height="1" fill="#000000"/><rect x="78" y="58" width="11" height="12" fill="#b4b4b4"/><rect x="78" y="58" width="10" height="11" fill="#787878"/><rect x="79" y="59" width="9" height="10" fill="#ffffff"/><rect x="80" y="61" width="7" height="1" fill="#000"/><rect x="80" y="64" width="7" height="1" fill="#000"/><rect x="80" y="67" width="7" height="1" fill="#000"/><rect x="104" y="57" width="15" height="15" fill="#b4b4b4"/><rect x="104" y="57" width="14" height="14" fill="#787878"/><rect x="105" y="58" width="13" height="13" fill="#ffffff"/><rect x="104" y="64" width="2" height="1" fill="#000000"/><rect x="107" y="64" width="2" height="1" fill="#000000"/><rect x="110" y="64" width="3" height="1" fill="#000000"/><rect x="114" y="64" width="2" height="1" fill="#000000"/><rect x="117" y="64" width="2" height="1" fill="#000000"/><rect x="110" y="65" width="3" height="1" fill="#000000"/><rect x="111" y="66" width="1" height="1" fill="#000000"/><rect x="111" y="67" width="1" height="1" fill="#000000"/><rect x="111" y="68" width="1" height="1" fill="#000000"/><rect x="110" y="69" width="3" height="1" fill="#000000"/><rect x="111" y="70" width="1" height="1" fill="#000000"/><rect x="136" y="57" width="14" height="1" fill="#505050"/><rect x="136" y="58" width="1" height="1" fill="#505050"/><rect x="137" y="58" width="2" height="1" fill="#a0a020"/><rect x="139" y="58" width="8" height="1" fill="#d8d8d8"/><rect x="147" y="58" width="1" height="1" fill="#a0a020"/><rect x="148" y="58" width="1" height="1" fill="#ffffff"/><rect x="149" y="58" width="1" height="1" fill="#505050"/><rect x="136" y="59" width="1" height="1" fill="#505050"/><rect x="137" y="59" width="2" height="1" fill="#a0a020"/><rect x="139" y="59" width="8" height="1" fill="#d8d8d8"/><rect x="147" y="59" width="2" height="1" fill="#a0a020"/><rect x="149" y="59" width="1" height="1" fill="#505050"/><rect x="136" y="60" width="1" height="1" fill="#505050"/><rect x="137" y="60" width="2" height="1" fill="#a0a020"/><rect x="139" y="60" width="8" height="1" fill="#d8d8d8"/><rect x="147" y="60" width="2" height="1" fill="#a0a020"/><rect x="149" y="60" width="1" height="1" fill="#505050"/><rect x="136" y="61" width="1" height="1" fill="#505050"/><rect x="137" y="61" width="2" height="1" fill="#a0a020"/><rect x="139" y="61" width="8" height="1" fill="#d8d8d8"/><rect x="147" y="61" width="2" height="1" fill="#a0a020"/><rect x="149" y="61" width="1" height="1" fill="#505050"/><rect x="136" y="62" width="1" height="1" fill="#505050"/><rect x="137" y="62" width="2" height="1" fill="#a0a020"/><rect x="139" y="62" width="8" height="1" fill="#d8d8d8"/><rect x="147" y="62" width="2" height="1" fill="#a0a020"/><rect x="149" y="62" width="1" height="1" fill="#505050"/><rect x="136" y="63" width="1" height="1" fill="#505050"/><rect x="137" y="63" width="2" height="1" fill="#a0a020"/><rect x="139" y="63" width="8" height="1" fill="#d8d8d8"/><rect x="147" y="63" width="2" height="1" fill="#a0a020"/><rect x="149" y="63" width="1" height="1" fill="#505050"/><rect x="136" y="64" width="1" height="1" fill="#505050"/><rect x="137" y="64" width="2" height="1" fill="#a0a020"/><rect x="139" y="64" width="8" height="1" fill="#d8d8d8"/><rect x="147" y="64" width="2" height="1" fill="#a0a020"/><rect x="149" y="64" width="1" height="1" fill="#505050"/><rect x="136" y="65" width="1" height="1" fill="#505050"/><rect x="137" y="65" width="12" height="1" fill="#a0a020"/><rect x="149" y="65" width="1" height="1" fill="#505050"/><rect x="136" y="66" width="1" height="1" fill="#505050"/><rect x="137" y="66" width="2" height="1" fill="#a0a020"/><rect x="139" y="66" width="8" height="1" fill="#505050"/><rect x="147" y="66" width="2" height="1" fill="#a0a020"/><rect x="149" y="66" width="1" height="1" fill="#505050"/><rect x="136" y="67" width="1" height="1" fill="#505050"/><rect x="137" y="67" width="2" height="1" fill="#a0a020"/><rect x="139" y="67" width="6" height="1" fill="#505050"/><rect x="145" y="67" width="2" height="1" fill="#ffffff"/><rect x="147" y="67" width="2" height="1" fill="#a0a020"/><rect x="149" y="67" width="1" height="1" fill="#505050"/><rect x="136" y="68" width="1" height="1" fill="#505050"/><rect x="137" y="68" width="2" height="1" fill="#a0a020"/><rect x="139" y="68" width="6" height="1" fill="#505050"/><rect x="145" y="68" width="2" height="1" fill="#ffffff"/><rect x="147" y="68" width="2" height="1" fill="#a0a020"/><rect x="149" y="68" width="1" height="1" fill="#505050"/><rect x="136" y="69" width="1" height="1" fill="#505050"/><rect x="137" y="69" width="2" height="1" fill="#a0a020"/><rect x="139" y="69" width="6" height="1" fill="#505050"/><rect x="145" y="69" width="2" height="1" fill="#ffffff"/><rect x="147" y="69" width="2" height="1" fill="#a0a020"/><rect x="149" y="69" width="1" height="1" fill="#505050"/><rect x="137" y="70" width="13" height="1" fill="#505050"/><path d="M168.5,59.5 H176.5 L178.5,61.5 V70.5 H168.5 Z" fill="#fff" stroke="#909090" stroke-width="1" shape-rendering="auto"/><path d="M176,60 L176,62 L178,62 Z" fill="#909090" shape-rendering="auto"/><rect x="170" y="62" width="6" height="1" fill="#000"/><rect x="170" y="65" width="7" height="1" fill="#000"/><rect x="164" y="65" width="1" height="1" fill="#000000"/><rect x="164" y="66" width="1" height="1" fill="#000000"/><rect x="165" y="67" width="1" height="1" fill="#000000"/><rect x="169" y="67" width="1" height="1" fill="#000000"/><rect x="166" y="68" width="5" height="1" fill="#000000"/><rect x="169" y="69" width="1" height="1" fill="#000000"/><rect x="196" y="57" width="15" height="15" fill="#b4b4b4"/><rect x="196" y="57" width="14" height="14" fill="#787878"/><rect x="197" y="58" width="13" height="13" fill="#ffffff"/><rect x="199" y="60" width="1" height="1" fill="#a0a0b8"/><rect x="202" y="60" width="1" height="1" fill="#ffff00"/><rect x="206" y="60" width="1" height="1" fill="#a0a0b8"/><rect x="199" y="61" width="1" height="1" fill="#ffff00"/><rect x="200" y="61" width="1" height="1" fill="#a0a0b8"/><rect x="202" y="61" width="1" height="1" fill="#ffff00"/><rect x="205" y="61" width="1" height="1" fill="#a0a0b8"/><rect x="206" y="61" width="1" height="1" fill="#ffff00"/><rect x="200" y="62" width="1" height="1" fill="#ffff00"/><rect x="201" y="62" width="1" height="1" fill="#a0a0b8"/><rect x="202" y="62" width="2" height="1" fill="#ffff00"/><rect x="204" y="62" width="1" height="1" fill="#a0a0b8"/><rect x="205" y="62" width="1" height="1" fill="#ffff00"/><rect x="201" y="63" width="4" height="1" fill="#ffff00"/><rect x="205" y="63" width="2" height="1" fill="#a0a0b8"/><rect x="199" y="64" width="9" height="1" fill="#ffff00"/><rect x="199" y="65" width="2" height="1" fill="#a0a0b8"/><rect x="201" y="65" width="4" height="1" fill="#ffff00"/><rect x="205" y="65" width="1" height="1" fill="#a0a0b8"/><rect x="200" y="66" width="1" height="1" fill="#a0a0b8"/><rect x="201" y="66" width="5" height="1" fill="#ffff00"/><rect x="206" y="66" width="1" height="1" fill="#a0a0b8"/><rect x="200" y="67" width="1" height="1" fill="#ffff00"/><rect x="203" y="67" width="1" height="1" fill="#ffff00"/><rect x="206" y="67" width="1" height="1" fill="#ffff00"/><rect x="207" y="67" width="1" height="1" fill="#a0a0b8"/><rect x="199" y="68" width="1" height="1" fill="#ffff00"/><rect x="203" y="68" width="1" height="1" fill="#ffff00"/><rect x="207" y="68" width="1" height="1" fill="#ffff00"/><rect x="224" y="57" width="15" height="15" fill="#b4b4b4"/><rect x="224" y="57" width="14" height="14" fill="#787878"/><rect x="225" y="58" width="13" height="13" fill="#ffffff"/><rect x="229" y="58" width="1" height="1" fill="#0000ff"/><rect x="233" y="58" width="1" height="1" fill="#0000ff"/><rect x="229" y="59" width="1" height="1" fill="#0000ff"/><rect x="233" y="59" width="1" height="1" fill="#0000ff"/><rect x="229" y="60" width="1" height="1" fill="#0000ff"/><rect x="233" y="60" width="1" height="1" fill="#0000ff"/><rect x="229" y="61" width="1" height="1" fill="#0000ff"/><rect x="233" y="61" width="1" height="1" fill="#0000ff"/><rect x="225" y="62" width="11" height="1" fill="#0000ff"/><rect x="237" y="62" width="1" height="1" fill="#0000ff"/><rect x="229" y="63" width="1" height="1" fill="#0000ff"/><rect x="230" y="63" width="3" height="1" fill="#c8c8a8"/><rect x="233" y="63" width="1" height="1" fill="#0000ff"/><rect x="229" y="64" width="1" height="1" fill="#0000ff"/><rect x="230" y="64" width="3" height="1" fill="#c8c8a8"/><rect x="233" y="64" width="1" height="1" fill="#0000ff"/><rect x="229" y="65" width="1" height="1" fill="#0000ff"/><rect x="230" y="65" width="3" height="1" fill="#c8c8a8"/><rect x="233" y="65" width="1" height="1" fill="#0000ff"/><rect x="225" y="66" width="11" height="1" fill="#0000ff"/><rect x="237" y="66" width="1" height="1" fill="#0000ff"/><rect x="229" y="67" width="1" height="1" fill="#0000ff"/><rect x="233" y="67" width="1" height="1" fill="#0000ff"/><rect x="229" y="68" width="1" height="1" fill="#0000ff"/><rect x="233" y="68" width="1" height="1" fill="#0000ff"/><rect x="229" y="70" width="1" height="1" fill="#0000ff"/><rect x="233" y="70" width="1" height="1" fill="#0000ff"/><rect x="256" y="57" width="15" height="15" fill="#b4b4b4"/><rect x="256" y="57" width="14" height="14" fill="#787878"/><rect x="257" y="58" width="13" height="13" fill="#ffffff"/><rect x="263" y="58" width="1" height="1" fill="#000000"/><rect x="262" y="59" width="3" height="1" fill="#000000"/><rect x="263" y="60" width="1" height="1" fill="#000000"/><rect x="263" y="61" width="1" height="1" fill="#000000"/><rect x="261" y="62" width="5" height="1" fill="#0000ff"/><rect x="258" y="63" width="1" height="1" fill="#000000"/><rect x="261" y="63" width="1" height="1" fill="#0000ff"/><rect x="262" y="63" width="3" height="1" fill="#c8c8a8"/><rect x="265" y="63" width="1" height="1" fill="#0000ff"/><rect x="268" y="63" width="1" height="1" fill="#000000"/><rect x="257" y="64" width="4" height="1" fill="#000000"/><rect x="261" y="64" width="1" height="1" fill="#0000ff"/><rect x="262" y="64" width="3" height="1" fill="#c8c8a8"/><rect x="265" y="64" width="1" height="1" fill="#0000ff"/><rect x="266" y="64" width="4" height="1" fill="#000000"/><rect x="258" y="65" width="1" height="1" fill="#000000"/><rect x="261" y="65" width="1" height="1" fill="#0000ff"/><rect x="262" y="65" width="3" height="1" fill="#c8c8a8"/><rect x="265" y="65" width="1" height="1" fill="#0000ff"/><rect x="268" y="65" width="1" height="1" fill="#000000"/><rect x="261" y="66" width="5" height="1" fill="#0000ff"/><rect x="263" y="67" width="1" height="1" fill="#000000"/><rect x="263" y="68" width="1" height="1" fill="#000000"/><rect x="262" y="69" width="3" height="1" fill="#000000"/><rect x="263" y="70" width="1" height="1" fill="#000000"/><rect x="280" y="52" width="24" height="24" fill="#a00000"/><rect x="281" y="53" width="22" height="22" fill="#ffe0e0"/><rect x="284" y="57" width="15" height="15" fill="#b4b4b4"/><rect x="284" y="57" width="14" height="14" fill="#787878"/><rect x="285" y="58" width="13" height="13" fill="#ffffff"/><rect x="289" y="58" width="1" height="1" fill="#0000ff"/><rect x="290" y="58" width="3" height="1" fill="#c0c0c0"/><rect x="293" y="58" width="1" height="1" fill="#0000ff"/><rect x="289" y="59" width="1" height="1" fill="#0000ff"/><rect x="290" y="59" width="3" height="1" fill="#c0c0c0"/><rect x="293" y="59" width="1" height="1" fill="#0000ff"/><rect x="289" y="60" width="1" height="1" fill="#0000ff"/><rect x="290" y="60" width="3" height="1" fill="#c0c0c0"/><rect x="293" y="60" width="1" height="1" fill="#0000ff"/><rect x="289" y="61" width="1" height="1" fill="#0000ff"/><rect x="290" y="61" width="3" height="1" fill="#c0c0c0"/><rect x="293" y="61" width="1" height="1" fill="#0000ff"/><rect x="289" y="62" width="1" height="1" fill="#0000ff"/><rect x="290" y="62" width="3" height="1" fill="#c0c0c0"/><rect x="293" y="62" width="1" height="1" fill="#0000ff"/><rect x="286" y="63" width="1" height="1" fill="#000000"/><rect x="289" y="63" width="1" height="1" fill="#0000ff"/><rect x="290" y="63" width="3" height="1" fill="#c0c0c0"/><rect x="293" y="63" width="1" height="1" fill="#0000ff"/><rect x="296" y="63" width="1" height="1" fill="#000000"/><rect x="285" y="64" width="4" height="1" fill="#000000"/><rect x="289" y="64" width="1" height="1" fill="#0000ff"/><rect x="290" y="64" width="3" height="1" fill="#c0c0c0"/><rect x="293" y="64" width="1" height="1" fill="#0000ff"/><rect x="294" y="64" width="4" height="1" fill="#000000"/><rect x="286" y="65" width="1" height="1" fill="#000000"/><rect x="289" y="65" width="1" height="1" fill="#0000ff"/><rect x="290" y="65" width="3" height="1" fill="#c0c0c0"/><rect x="293" y="65" width="1" height="1" fill="#0000ff"/><rect x="296" y="65" width="1" height="1" fill="#000000"/><rect x="289" y="66" width="1" height="1" fill="#0000ff"/><rect x="290" y="66" width="3" height="1" fill="#c0c0c0"/><rect x="293" y="66" width="1" height="1" fill="#0000ff"/><rect x="289" y="67" width="1" height="1" fill="#0000ff"/><rect x="290" y="67" width="3" height="1" fill="#c0c0c0"/><rect x="293" y="67" width="1" height="1" fill="#0000ff"/><rect x="289" y="68" width="1" height="1" fill="#0000ff"/><rect x="290" y="68" width="3" height="1" fill="#c0c0c0"/><rect x="293" y="68" width="1" height="1" fill="#0000ff"/><rect x="289" y="69" width="1" height="1" fill="#0000ff"/><rect x="290" y="69" width="3" height="1" fill="#c0c0c0"/><rect x="293" y="69" width="1" height="1" fill="#0000ff"/><rect x="289" y="70" width="1" height="1" fill="#0000ff"/><rect x="290" y="70" width="3" height="1" fill="#c0c0c0"/><rect x="293" y="70" width="1" height="1" fill="#0000ff"/><rect x="312" y="57" width="15" height="15" fill="#b4b4b4"/><rect x="312" y="57" width="14" height="14" fill="#787878"/><rect x="313" y="58" width="13" height="13" fill="#ffffff"/><rect x="319" y="58" width="1" height="1" fill="#000000"/><rect x="318" y="59" width="3" height="1" fill="#000000"/><rect x="319" y="60" width="1" height="1" fill="#000000"/><rect x="319" y="61" width="1" height="1" fill="#000000"/><rect x="313" y="62" width="13" height="1" fill="#0000ff"/><rect x="313" y="63" width="13" height="1" fill="#c0c0c0"/><rect x="313" y="64" width="13" height="1" fill="#c0c0c0"/><rect x="313" y="65" width="13" height="1" fill="#c0c0c0"/><rect x="313" y="66" width="13" height="1" fill="#0000ff"/><rect x="319" y="67" width="1" height="1" fill="#000000"/><rect x="319" y="68" width="1" height="1" fill="#000000"/><rect x="318" y="69" width="3" height="1" fill="#000000"/><rect x="319" y="70" width="1" height="1" fill="#000000"/></svg>
</body></html>
